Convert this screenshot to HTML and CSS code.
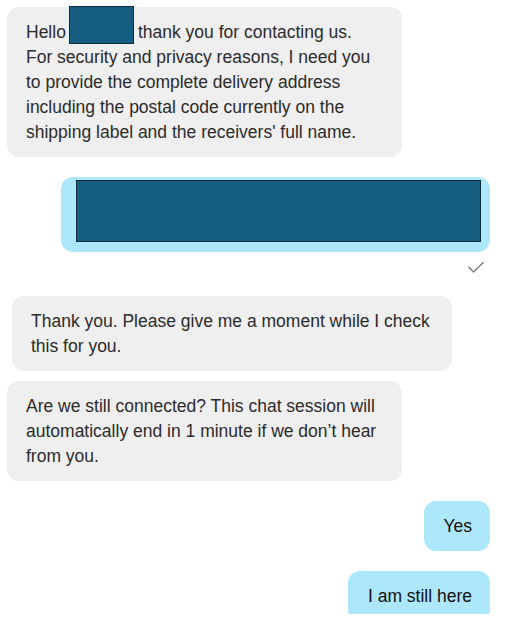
FILE: index.html
```html
<!DOCTYPE html>
<html lang="en">
<head>
<meta charset="utf-8">
<title>Chat</title>
<link rel="stylesheet" href="styles.css">
</head>
<body>
<div class="chat">
  <div class="msg in first">Hello<span class="redact redact-name"></span>thank you for contacting us.<br>For security and privacy reasons, I need you<br>to provide the complete delivery address<br>including the postal code currently on the<br>shipping label and the receivers' full name.</div>

  <div class="msg out redacted">
    <div class="redact redact-block"></div>
  </div>
  <div class="status">
    <svg class="check" width="16" height="12" viewBox="0 0 16 12" aria-hidden="true">
      <polyline points="0.8,6.2 5.6,11 15.2,1.4" fill="none" stroke="#7a7a7a" stroke-width="1.4" stroke-linecap="round" stroke-linejoin="round"/>
    </svg>
  </div>

  <div class="msg in wide">Thank you. Please give me a moment while I check<br>this for you.</div>

  <div class="msg in second">Are we still connected? This chat session will<br>automatically end in 1 minute if we don’t hear<br>from you.</div>

  <div class="msg out short yes">Yes</div>

  <div class="msg out short last">I am still here</div>
</div>
</body>
</html>
```

FILE: styles.css
```css
html, body {
  margin: 0;
  padding: 0;
  background: #ffffff;
}

body {
  font-family: "Liberation Sans", Arial, sans-serif;
  font-size: 17.5px;
  line-height: 25px;
  color: #2b2b2b;
}

.chat {
  height: 614px;
  overflow: hidden;
  padding: 7px 18px 0 7px;
  box-sizing: border-box;
  display: flex;
  flex-direction: column;
  align-items: flex-start;
}

.msg {
  white-space: nowrap;
  border-radius: 12px;
  box-sizing: border-box;
}

.in {
  background: #efefef;
  color: #2b2b2b;
  padding: 13px 20px 12px 19px;
}

.first {
  width: 395px;
}

.second {
  width: 395px;
  margin-top: 10px;
}

.wide {
  width: 440px;
  margin-left: 5px;
  margin-top: 23px;
}

.out {
  background: #ade7fb;
  color: #111111;
  align-self: flex-end;
}

.redacted {
  margin-top: 20px;
  padding: 3px 9px 10px 15px;
}

.short {
  margin-top: 20px;
  padding: 13px 18px 12px 18px;
}

.yes {
  padding-left: 19px;
}

.last {
  padding-left: 20px;
}

.redact {
  background: #175f80;
  border: 1px solid #0c2c3c;
  box-sizing: border-box;
}

.redact-name {
  display: inline-block;
  width: 65px;
  height: 38px;
  vertical-align: -6px;
  margin: -14px 4px 0 3px;
}

.redact-block {
  width: 405px;
  height: 62px;
}

.status {
  align-self: flex-end;
  margin-top: 9px;
  margin-right: 6px;
  height: 12px;
  display: flex;
}

.check {
  display: block;
}
```
